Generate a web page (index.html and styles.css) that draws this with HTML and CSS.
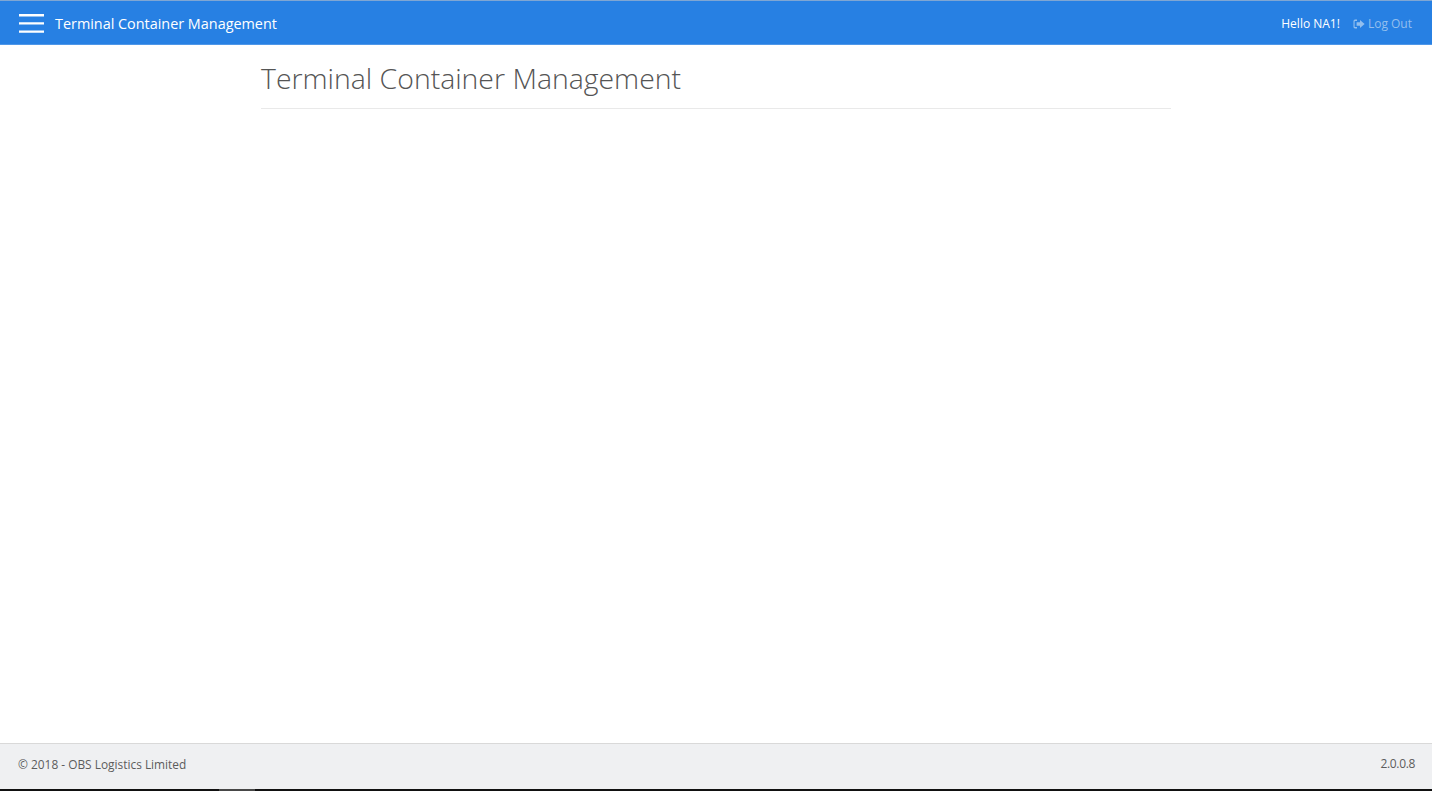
FILE: index.html
```html
<!DOCTYPE html>
<html lang="en">
<head>
<meta charset="utf-8">
<title>Terminal Container Management</title>
<link rel="stylesheet" href="styles.css">
</head>
<body>
<header class="navbar">
  <div class="nav-left">
    <svg class="burger" width="26" height="20" viewBox="0 0 26 20" aria-hidden="true"><path d="M0 2.2h25M0 10.4h25M0 18.6h25" stroke="#fff" stroke-width="2.4" fill="none"/></svg>
    <span class="brand">Terminal Container Management</span>
  </div>
  <div class="nav-right">
    <span class="hello">Hello NA1!</span>
    <a class="logout"><svg class="logout-icon" width="12" height="10" viewBox="0 0 12 10" aria-hidden="true"><path d="M4 0.5H2A1.6 1.6 0 0 0 .5 2v6A1.6 1.6 0 0 0 2 9.5h2V8H2.2a.6.6 0 0 1-.6-.6V2.6a.6.6 0 0 1 .6-.6H4zM7 1v2.3H3.6v3.4H7V9l4.6-4z" fill="currentColor"/></svg>Log Out</a>
  </div>
</header>
<main class="content">
  <h1 class="title">Terminal Container Management</h1>
</main>
<footer class="footer">
  <span>© 2018 - OBS Logistics Limited</span>
  <span class="version">2.0.0.8</span>
</footer>
<div class="edge"><div class="edge-tab"></div></div>
</body>
</html>
```
FILE: styles.css
```css
* { box-sizing: border-box; }
html, body { height: 100%; margin: 0; }
body {
  display: flex;
  flex-direction: column;
  height: 791px;
  overflow: hidden;
  background: #fff;
  font-family: "Open Sans", "Noto Sans", sans-serif;
  color: #555;
}
.navbar {
  flex: 0 0 45px;
  display: flex;
  justify-content: space-between;
  align-items: center;
  background: #2780e3;
  border-top: 1px solid #7fa6d3;
  border-bottom: 1px solid #4f97e8;
  padding: 0 20px 0 19px;
  color: #fff;
}
.nav-left { display: flex; align-items: center; gap: 10px; }
.burger { display: block; }
.brand { font-size: 14.4px; padding-top: 2px; }
.nav-right { display: flex; align-items: center; gap: 13px; font-size: 12px; padding-top: 2px; }
.logout { display: flex; align-items: center; gap: 3px; color: #93bfee; }
.content { flex: 1; width: 910px; margin-left: 261px; }
.title {
  margin: 0;
  height: 64px;
  padding-top: 13px;
  font-size: 28.4px;
  font-weight: 300;
  line-height: 40px;
  color: #555;
  border-bottom: 1px solid #e9e9e9;
}
.footer {
  flex: 0 0 46px;
  display: flex;
  justify-content: space-between;
  align-items: center;
  padding: 0 17px 6px 18px;
  background: #eff0f2;
  border-top: 1px solid #d9d9d9;
  font-size: 11.9px;
  color: #5c5c5c;
}
.version { font-size: 12px; letter-spacing: -0.35px; }
.edge { flex: 0 0 2px; background: #111; }
.edge-tab { width: 36px; height: 2px; margin-left: 219px; background: #484848; }
```
